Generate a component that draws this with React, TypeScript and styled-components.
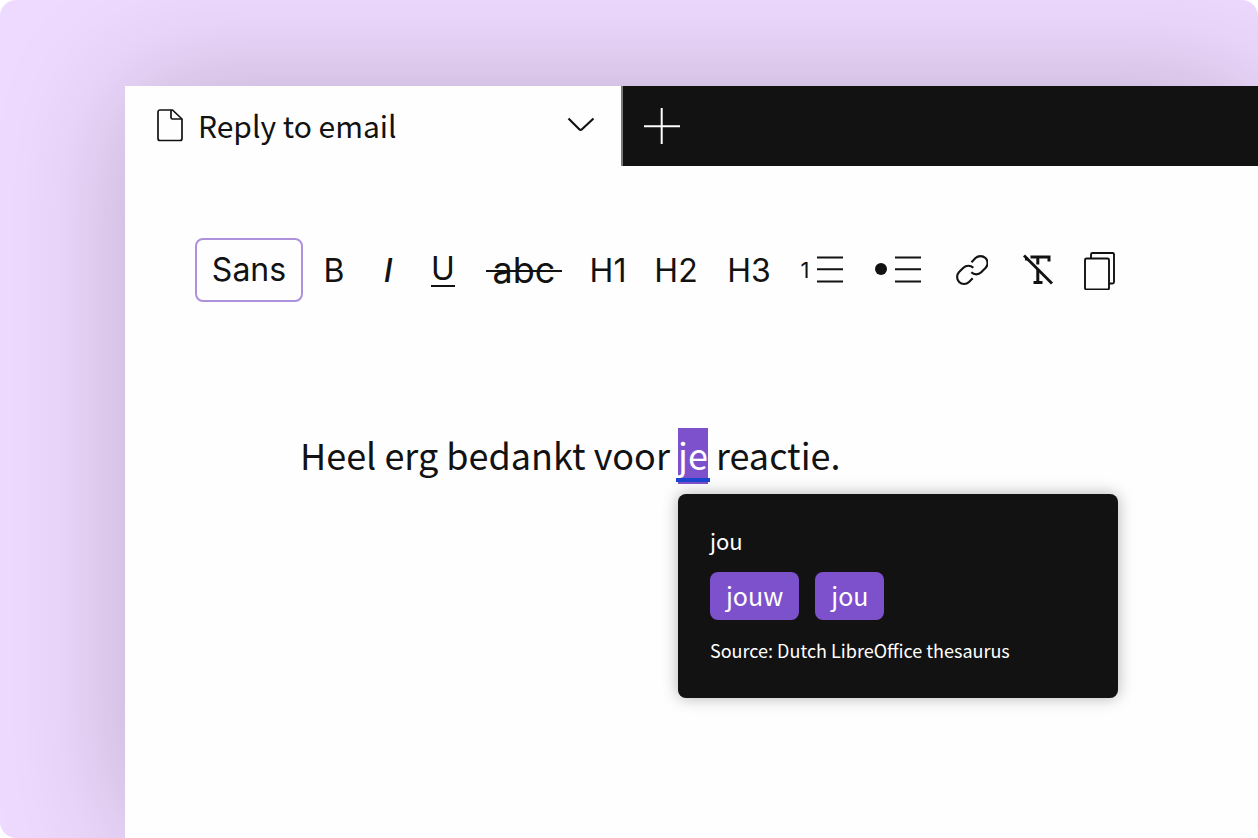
import React from "react";
import styled, { createGlobalStyle } from "styled-components";

const ink = "#121212";
const purple = "#7d51cc";
const textFont = `"Noto Sans CJK SC", "Noto Sans", sans-serif`;
const toolFont = `Inter, "Liberation Sans", sans-serif`;

const GlobalStyle = createGlobalStyle`
  * { box-sizing: border-box; }
  body { margin: 0; background: #fff; color: ${ink}; font-family: ${textFont}; }
  button { border: 0; padding: 0; background: none; color: inherit; font: inherit; cursor: pointer; }
  svg { display: block; flex: none; }
`;

const Backdrop = styled.div`
  display: flex;
  min-height: 100vh;
  padding: 86px 0 0 125px;
  overflow: hidden;
  border-radius: 16px;
  background: #efdaff;
`;

const Window = styled.div`
  flex: 1;
  min-width: 0;
  background: #fefefe;
  box-shadow: 0 0 120px rgba(0, 0, 0, 0.21);
`;

const TabBar = styled.header`
  display: flex;
  height: 80px;
  background: ${ink};
`;

const Tab = styled.button`
  display: flex;
  align-items: center;
  width: 498px;
  padding: 0 26px 0 32px;
  gap: 15px;
  border-right: 2px solid #777;
  background: #fefefe;
  font-size: 30px;
  line-height: 40px;
`;

const TabTitle = styled.span`
  flex: 1;
  padding-bottom: 2px;
  text-align: left;
`;

const AddTab = styled.button`
  display: grid;
  place-items: center;
  width: 78px;
  color: #fff;
`;

const Toolbar = styled.div`
  display: flex;
  align-items: center;
  padding: 72px 70px 0;
  font-family: ${toolFont};
  font-size: 32px;
  line-height: 40px;
`;

const FontButton = styled.button`
  width: 108px;
  height: 64px;
  margin-right: 4px;
  border: 2px solid #ae91dc;
  border-radius: 8px;
  font-size: 32px;
`;

const Tool = styled.button<{ $width: number }>`
  display: flex;
  flex: none;
  align-items: center;
  justify-content: center;
  gap: 8px;
  width: ${(p) => p.$width}px;
  height: 64px;
`;

const Label = styled.span`
  padding-top: 2px;
`;

const Slanted = styled.em`
  padding-top: 2px;
  font-weight: 500;
`;

const Underlined = styled.span`
  border-bottom: 2px solid ${ink};
  line-height: 32px;
`;

const Struck = styled.s`
  position: relative;
  padding: 0 7px;
  font-size: 36px;
  text-decoration: none;

  &::after {
    content: "";
    position: absolute;
    top: 20px;
    left: 0;
    right: 0;
    height: 2px;
    background: ${ink};
  }
`;

const ListNumber = styled.span`
  font-size: 22px;
`;

const Paragraph = styled.p`
  margin: 126px 0 0;
  padding-left: 175px;
  font-size: 36px;
  line-height: 52px;
  white-space: nowrap;
`;

const Flagged = styled.span`
  position: relative;
  display: inline-block;
`;

const Word = styled.mark`
  display: block;
  padding-bottom: 4px;
  background: ${purple};
  color: #fff;

  &::after {
    content: "";
    position: absolute;
    top: 50px;
    left: -2px;
    right: -2px;
    height: 4px;
    background: #1b46cf;
  }
`;

const Popover = styled.span`
  position: absolute;
  top: 66px;
  left: 0;
  display: flex;
  flex-direction: column;
  width: 440px;
  padding: 32px;
  border-radius: 8px;
  background: ${ink};
  box-shadow: 0 0 16px rgba(0, 0, 0, 0.3);
  color: #fff;
`;

const Term = styled.span`
  font-size: 22px;
  line-height: 28px;
`;

const Suggestions = styled.span`
  display: flex;
  gap: 16px;
  margin: 18px 0 16px;
`;

const Suggestion = styled.button`
  height: 48px;
  padding: 0 16px 2px;
  border-radius: 8px;
  background: ${purple};
  font-size: 25px;
  line-height: 46px;
`;

const Source = styled.span`
  padding-bottom: 2px;
  font-size: 18px;
  line-height: 28px;
`;

interface StrokeProps {
  w: number;
  h: number;
  children: React.ReactNode;
}

const Stroke = ({ w, h, children }: StrokeProps) => (
  <svg width={w} height={h} viewBox={`0 0 ${w} ${h}`} fill="none" stroke="currentColor" strokeWidth="2" aria-hidden="true">
    {children}
  </svg>
);

const ListLines = () => (
  <Stroke w={26} h={28}>
    <path d="M0 1.500h26M0 13.300h26M0 25.500h26" />
  </Stroke>
);

export default function App() {
  return (
    <>
      <GlobalStyle />
      <Backdrop>
        <Window>
          <TabBar>
            <Tab>
              <Stroke w={26} h={34}>
                <path d="M3 1h12.500L25 10V29.500a2 2 0 0 1-2 2H3a2 2 0 0 1-2-2V3a2 2 0 0 1 2-2z" strokeWidth="1.700" />
                <path d="M14 1V8.500a1.500 1.500 0 0 0 1.500 1.500h9.500" strokeWidth="1.700" />
              </Stroke>
              <TabTitle>Reply to email</TabTitle>
              <Stroke w={28} h={18}>
                <path d="M1.500 1.500L12.500 12.500a1.700 1.700 0 0 0 2.200 0L26.500 1.500" strokeWidth="2.200" />
              </Stroke>
            </Tab>
            <AddTab aria-label="New tab">
              <Stroke w={36} h={36}>
                <path d="M17.700 0v36M0 18.300h36" />
              </Stroke>
            </AddTab>
          </TabBar>

          <Toolbar role="toolbar" aria-label="Formatting">
            <FontButton>Sans</FontButton>
            <Tool $width={54}><Label>B</Label></Tool>
            <Tool $width={54}><Slanted>I</Slanted></Tool>
            <Tool $width={56}><Underlined>U</Underlined></Tool>
            <Tool $width={106}><Struck>abc</Struck></Tool>
            <Tool $width={62}><Label>H1</Label></Tool>
            <Tool $width={74}><Label>H2</Label></Tool>
            <Tool $width={72}><Label>H3</Label></Tool>
            <Tool $width={74} aria-label="Numbered list">
              <ListNumber>1</ListNumber>
              <ListLines />
            </Tool>
            <Tool $width={78} aria-label="Bulleted list">
              <svg width="12" height="14" viewBox="0 0 12 14" aria-hidden="true">
                <circle cx="6" cy="6" r="6" fill="currentColor" />
              </svg>
              <ListLines />
            </Tool>
            <Tool $width={70} aria-label="Link">
              <Stroke w={32} h={32}>
                <path d="M15.500 8.200l4-4.100a7.200 7.200 0 0 1 10 0 7 7 0 0 1 0 9.900l-4.300 4.300a7 7 0 0 1-9.900 0" strokeWidth="2.100" />
                <path d="M17.300 13.800a7 7 0 0 0-9.900 0l-4.300 4.300a7 7 0 0 0 0 9.800 7 7 0 0 0 9.900 0l3.700-3.700" strokeWidth="2.100" />
              </Stroke>
            </Tool>
            <Tool $width={62} aria-label="Clear formatting">
              <Stroke w={30} h={32}>
                <path d="M1 1.500l28 28" strokeWidth="2.800" />
                <path d="M3.500 6.500V3M7.500 3h18.500v4.500M14.800 3v7.500M14.800 15v13" strokeWidth="3" />
                <path d="M10.500 28.500h9" strokeWidth="3" />
              </Stroke>
            </Tool>
            <Tool $width={62} aria-label="Copy">
              <Stroke w={32} h={40}>
                <rect x="1" y="8.500" width="24" height="31" rx="1.500" strokeWidth="1.900" />
                <path d="M7 8.500V4.500A1.500 1.500 0 0 1 8.500 3H28.500a1.500 1.500 0 0 1 1.500 1.500V32a1.500 1.500 0 0 1-1.500 1.500h-3.500" strokeWidth="1.900" />
              </Stroke>
            </Tool>
          </Toolbar>

          <Paragraph>
            Heel erg bedankt voor{" "}
            <Flagged>
              <Word>je</Word>
              <Popover role="dialog" aria-label="Suggestions">
                <Term>jou</Term>
                <Suggestions>
                  <Suggestion>jouw</Suggestion>
                  <Suggestion>jou</Suggestion>
                </Suggestions>
                <Source>Source: Dutch LibreOffice thesaurus</Source>
              </Popover>
            </Flagged>{" "}
            reactie.
          </Paragraph>
        </Window>
      </Backdrop>
    </>
  );
}
